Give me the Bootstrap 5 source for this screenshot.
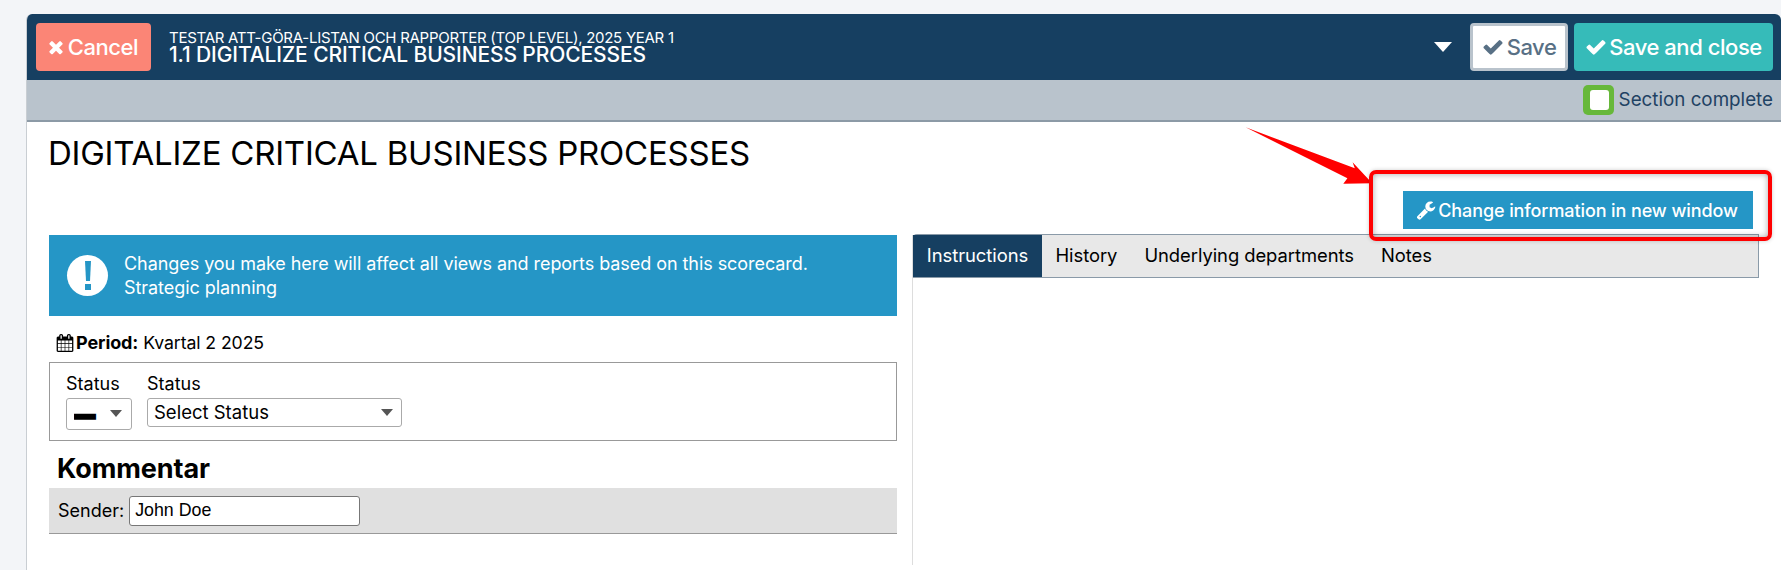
<!DOCTYPE html>
<html lang="en">
<head>
  <meta charset="UTF-8">
  <title>Digitalize critical business processes</title>
  <link href="https://cdn.jsdelivr.net/npm/bootstrap@5.3.0/dist/css/bootstrap.min.css" rel="stylesheet">
  <style>
    html, body { height: 570px; overflow: hidden; }
    body { background: #f3f5f8; padding: 14px 0 0 26px; font-family: Inter, "Liberation Sans", sans-serif; color: #000; }
    .fa-ico { fill: currentColor; flex: none; }
    .sheet { height: 556px; background: #fff; border-left: 1px solid #c9ced3; border-radius: 6px 6px 0 0; position: relative; overflow: hidden; }
    .top-bar { height: 66px; background: #163f61; color: #fff; padding: 9px 8px 9px 9px; }
    .act-btn { height: 48px; border: 0; border-radius: 4px; font-size: 22px; font-weight: 500; color: #fff; display: flex; align-items: center; justify-content: center; gap: 2px; letter-spacing: -.45px; }
    .act-cancel { width: 115px; background: #fb8576; padding-right: 9px; }
    .act-save { width: 98px; background: #fff; color: #587085; border: 3px solid #b9c3cc; gap: 3px; }
    .act-close { width: 199px; background: #36bbb9; margin-left: 6px; }
    .crumb-small { font-size: 15px; line-height: 16px; letter-spacing: -.27px; }
    .crumb-big { font-size: 21px; line-height: 18px; font-weight: 500; letter-spacing: -.12px; }
    .crumb-wrap { margin-left: 18px; }
    .caret-down { width: 0; height: 0; border-left: 9px solid transparent; border-right: 9px solid transparent; border-top: 10px solid #fff; margin-right: 18px; }
    .sub-bar { height: 42px; background: #b9c3cc; border-bottom: 2px solid #8c9aa6; padding-right: 8px; color: #1f4263; font-size: 18.8px; }
    .done-box { width: 31px; height: 30px; background: #67b83a; border-radius: 5px; padding: 5px 5px 5px 7px; margin-right: 5px; }
    .done-box span { display: block; width: 19px; height: 20px; background: #fff; border-radius: 3px; }
    .main-title { font-size: 33px; font-weight: 400; line-height: 40px; margin: 11px 0 0 21px; letter-spacing: -.23px; }
    .change-row { padding: 0 28px 0 0; margin-top: 18px; }
    .change-btn { width: 350px; height: 38px; background: #2596c6; color: #fff; border: 0; border-radius: 0; font-size: 18px; font-weight: 500; display: flex; align-items: center; justify-content: center; gap: 2px; letter-spacing: -.1px; padding-right: 8px; }
    .cols { margin-top: 6px; padding-left: 22px; padding-right: 22px; gap: 15px; }
    .left-col { width: 848px; flex: none; }
    .info-box { height: 81px; background: #2596c6; color: #fff; font-size: 18px; line-height: 24px; padding: 0 20px 0 18px; gap: 16px; letter-spacing: -.06px; }
    .info-circle { width: 41px; height: 41px; background: #fff; border-radius: 50%; flex: none; }
    .period-line { margin: 16px 0 0 7px; font-size: 17.7px; line-height: 22px; gap: 2px; letter-spacing: -.1px; }
    .period-line b { font-size: 18px; }
    .status-box { margin-top: 8px; height: 79px; border: 1px solid #999; padding: 9px 16px; gap: 15px; }
    .status-box label { display: block; font-size: 18px; line-height: 24px; margin-bottom: 2px; }
    .pick { display: block; border: 1px solid #aaa; border-radius: 3px; font-size: 18.5px; line-height: 1; padding: 0 6px; color: #000; background: #fff url("data:image/svg+xml,%3Csvg xmlns='http://www.w3.org/2000/svg' width='12' height='7'%3E%3Cpath d='M0 0h12L6 7z' fill='%23555'/%3E%3C/svg%3E") no-repeat right 9px top 11px; appearance: none; font-family: inherit; }
    .pick-a { width: 66px; height: 32px; padding: 0 0 6px 7px; font-family: "DejaVu Sans", sans-serif; font-size: 36px; }
    .pick-b { width: 255px; height: 29px; background-position: right 8px top 10px; }
    .comment-title { font-size: 27px; font-weight: 700; line-height: 32px; margin: 12px 0 3px 8px; letter-spacing: -.1px; }
    .sender-row { height: 46px; background: #e0e0e0; border-bottom: 1px solid #999; padding-left: 9px; gap: 5px; font-size: 18px; }
    .sender-input { width: 231px; height: 30px; border: 1px solid #777; border-radius: 3px; padding: 0 5px; font-size: 17.8px; font-family: "Liberation Sans", sans-serif; }
    .right-col { flex: 1; height: 330px; border-left: 1px solid #ddd; }
    .tab-strip { height: 44px; background: #e8e8e8; border: 1px solid #8a9aa8; border-left: 0; border-radius: 4px 0 0 0; font-size: 18.4px; margin-top: -1px; }
    .tab-item { height: 42px; padding: 0 13.5px; display: flex; align-items: center; letter-spacing: -.05px; }
    .tab-on { background: #163f61; color: #fff; width: 129px; justify-content: center; padding: 0; }
    .red-box { position: absolute; left: 1342px; top: 156px; width: 403px; height: 71px; border: 4px solid #f00; border-radius: 7px; box-shadow: inset 0 0 6px rgba(0,0,0,.35), 0 0 4px rgba(0,0,0,.2); }
    .red-arrow { position: absolute; left: 1213px; top: 110px; }
  </style>
</head>
<body>
  <div class="sheet">
    <div class="top-bar d-flex align-items-center">
      <button class="act-btn act-cancel"><svg class="fa-ico" width="20" height="20" viewBox="0 0 1792 1792"><path d="M1490 1322q0 40-28 68l-136 136q-28 28-68 28t-68-28l-294-294-294 294q-28 28-68 28t-68-28l-136-136q-28-28-28-68t28-68l294-294-294-294q-28-28-28-68t28-68l136-136q28-28 68-28t68 28l294 294 294-294q28-28 68-28t68 28l136 136q28 28 28 68t-28 68l-294 294 294 294q28 28 28 68z"/></svg>Cancel</button>
      <div class="crumb-wrap">
        <div class="crumb-small">TESTAR ATT-GÖRA-LISTAN OCH RAPPORTER (TOP LEVEL), 2025 YEAR 1</div>
        <div class="crumb-big">1.1 DIGITALIZE CRITICAL BUSINESS PROCESSES</div>
      </div>
      <div class="caret-down ms-auto"></div>
      <button class="act-btn act-save"><svg class="fa-ico" width="22" height="22" viewBox="0 0 1792 1792"><path d="M1671 566q0 40-28 68l-724 724-136 136q-28 28-68 28t-68-28l-136-136-362-362q-28-28-28-68t28-68l136-136q28-28 68-28t68 28l294 295 656-657q28-28 68-28t68 28l136 136q28 28 28 68z"/></svg>Save</button>
      <button class="act-btn act-close"><svg class="fa-ico" width="22" height="22" viewBox="0 0 1792 1792"><path d="M1671 566q0 40-28 68l-724 724-136 136q-28 28-68 28t-68-28l-136-136-362-362q-28-28-28-68t28-68l136-136q28-28 68-28t68 28l294 295 656-657q28-28 68-28t68 28l136 136q28 28 28 68z"/></svg>Save and close</button>
    </div>
    <div class="sub-bar d-flex align-items-center justify-content-end">
      <div class="done-box"><span></span></div>
      <div>Section complete</div>
    </div>
    <h1 class="main-title">DIGITALIZE CRITICAL BUSINESS PROCESSES</h1>
    <div class="change-row d-flex justify-content-end">
      <button class="change-btn"><svg class="fa-ico" width="20" height="20" viewBox="0 0 1792 1792"><path d="M448 1472q0-26-19-45t-45-19-45 19-19 45 19 45 45 19 45-19 19-45zm644-420l-682 682q-37 37-90 37-52 0-91-37l-106-108q-38-36-38-90 0-53 38-91l681-681q39 98 114.5 173.5t173.5 114.5zm634-435q0 39-23 106-47 134-164.5 217.5t-258.5 83.5q-185 0-316.5-131.5t-131.5-316.5 131.5-316.5 316.5-131.5q58 0 121.5 16.5t107.5 46.5q16 11 16 28t-16 28l-293 169v224l193 107q5-3 79-48.5t135.5-81 70.5-35.5q15 0 23.5 10t8.5 25z"/></svg>Change information in new window</button>
    </div>
    <div class="cols d-flex">
      <div class="left-col">
        <div class="info-box d-flex align-items-center">
          <div class="info-circle d-flex align-items-center justify-content-center"><svg width="8" height="29" viewBox="0 0 8 29"><path d="M1 0h6l-1 20H2z" fill="#2596c6"/><rect x="1" y="23" width="6" height="6" fill="#2596c6"/></svg></div>
          <div>Changes you make here will affect all views and reports based on this scorecard.<br>Strategic planning</div>
        </div>
        <div class="period-line d-flex align-items-center">
          <svg class="fa-ico" width="18" height="18" viewBox="0 0 1792 1792"><path d="M192 1664h288v-288h-288v288zm352 0h320v-288h-320v288zm-352-352h288v-320h-288v320zm352 0h320v-320h-320v320zm-352-384h288v-288h-288v288zm736 736h320v-288h-320v288zm-384-736h320v-288h-320v288zm768 736h288v-288h-288v288zm-384-352h320v-320h-320v320zm-352-864v-288q0-13-9.5-22.5t-22.5-9.5h-64q-13 0-22.5 9.5t-9.5 22.5v288q0 13 9.5 22.5t22.5 9.5h64q13 0 22.5-9.5t9.5-22.5zm736 864h288v-320h-288v320zm-384-384h320v-288h-320v288zm384 0h288v-288h-288v288zm32-480v-288q0-13-9.5-22.5t-22.5-9.5h-64q-13 0-22.5 9.5t-9.5 22.5v288q0 13 9.5 22.5t22.5 9.5h64q13 0 22.5-9.5t9.5-22.5zm384-64v1280q0 52-38 90t-90 38h-1408q-52 0-90-38t-38-90v-1280q0-52 38-90t90-38h128v-96q0-66 47-113t113-47h64q66 0 113 47t47 113v96h384v-96q0-66 47-113t113-47h64q66 0 113 47t47 113v96h128q52 0 90 38t38 90z"/></svg>
          <span><b class="fw-bold">Period:</b> Kvartal 2 2025</span>
        </div>
        <div class="status-box d-flex">
          <div>
            <label>Status</label>
            <select class="pick pick-a"><option>━</option></select>
          </div>
          <div>
            <label>Status</label>
            <select class="pick pick-b"><option>Select Status</option></select>
          </div>
        </div>
        <div class="comment-title">Kommentar</div>
        <div class="sender-row d-flex align-items-center">
          <span>Sender:</span>
          <input class="sender-input" type="text" value="John Doe">
        </div>
      </div>
      <div class="right-col">
        <div class="tab-strip d-flex">
          <div class="tab-item tab-on">Instructions</div>
          <div class="tab-item">History</div>
          <div class="tab-item">Underlying departments</div>
          <div class="tab-item">Notes</div>
        </div>
      </div>
    </div>
    <!-- annotation drawn over the screenshot -->
    <svg class="red-arrow" width="140" height="70" viewBox="0 0 140 70"><path d="M5.6 3.3 L114.8 44.3 L112.6 38.3 L132.2 59.3 L103.3 59.7 L107.4 54.3 Z" fill="#f00"/></svg>
    <div class="red-box"></div>
  </div>
</body>
</html>
